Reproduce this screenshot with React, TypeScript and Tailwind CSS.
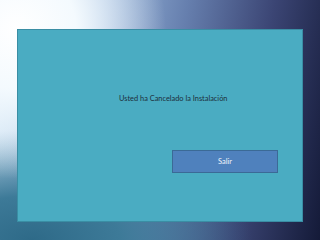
import React from 'react';

export default function App() {
  return (
    <div className="w-[320px] h-[240px] overflow-hidden pt-[29px] pl-[17px] bg-[radial-gradient(ellipse_150px_150px_at_5%_12%,#ffffff_0%,#f4fafe_40%,rgba(200,225,245,0)_100%),radial-gradient(ellipse_220px_110px_at_10%_100%,#2e6a88_0%,#3d7a98_40%,rgba(60,110,150,0)_100%),linear-gradient(100deg,#d6e9f7_0%,#9ab8dc_28%,#667fae_52%,#3b4574_76%,#141a38_100%)] font-['Lato',sans-serif]">
      <div className="w-[286px] h-[193px] bg-[#4aacc2] border border-[#3a8ea4] flex flex-col">
        <p className="mt-[64px] ml-[101px] text-[7.4px] leading-[10px] text-[#1d2f3c]">
          Usted ha Cancelado la Instalación
        </p>
        <div className="mt-[46px] ml-[154px] w-[106px] h-[23px] bg-[#4f81bd] border border-[#3b6a96] flex items-center justify-center">
          <span className="text-[7.5px] text-[#eef3fa]">Salir</span>
        </div>
      </div>
    </div>
  );
}
